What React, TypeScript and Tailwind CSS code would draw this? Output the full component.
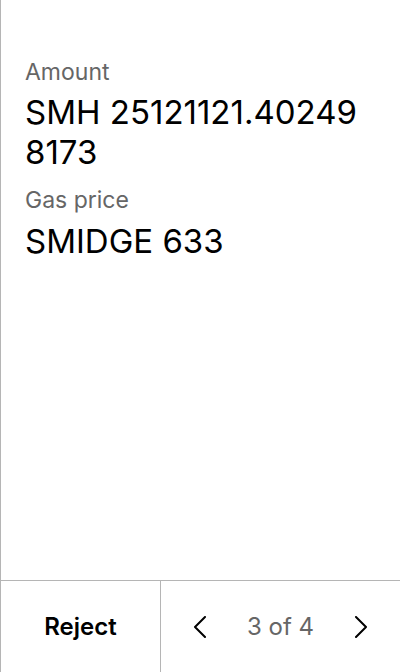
import React from 'react';

const Chevron: React.FC<{ dir: 'left' | 'right' }> = ({ dir }) => (
  <svg width="14" height="22" viewBox="0 0 14 22" fill="none" stroke="#000" strokeWidth="2" strokeLinecap="round" strokeLinejoin="round">
    {dir === 'left' ? <path d="M12 1L2 11l10 10" /> : <path d="M2 1l10 10L2 21" />}
  </svg>
);

export default function App() {
  return (
    <div className="h-[672px] w-[400px] flex flex-col bg-white border-l border-[#b5b5b5] font-['Inter',sans-serif]">
      <div className="flex-1 pl-6 pr-[36px] pt-[56px]">
        <div className="text-[23px] leading-8 text-[#666]">Amount</div>
        <div className="text-[33px] leading-10 text-black mt-[4px] break-all">SMH 25121121.402498173</div>
        <div className="text-[23px] leading-8 text-[#666] mt-[12px]">Gas price</div>
        <div className="text-[33px] leading-10 text-black mt-[5px]">SMIDGE 633</div>
      </div>
      <div className="h-[92px] flex border-t border-[#b5b5b5]">
        <button className="w-[160px] flex items-center justify-center border-r border-[#b5b5b5] text-[24px] font-semibold text-black">
          Reject
        </button>
        <div className="flex-1 flex items-center justify-between px-[32px]">
          <Chevron dir="left" />
          <span className="text-[24px] text-[#666]">3 of 4</span>
          <Chevron dir="right" />
        </div>
      </div>
    </div>
  );
}
